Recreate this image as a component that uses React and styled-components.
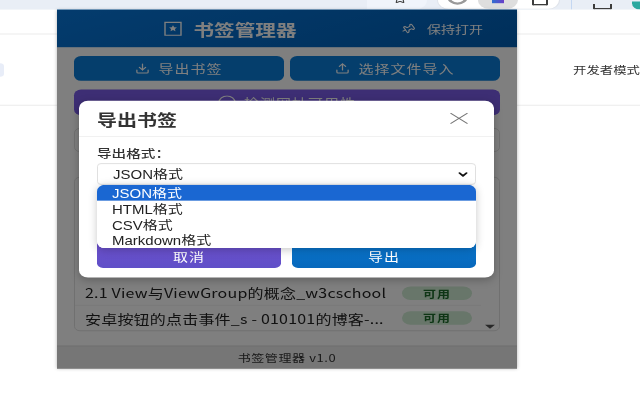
import React from 'react';
import styled, { createGlobalStyle } from 'styled-components';
import { Download, Upload, Pin, ChevronDown, Star } from 'lucide-react';

const GlobalStyle = createGlobalStyle`
    html, body {
        margin: 0;
        padding: 0;
        width: 640px;
        height: 400px;
        overflow: hidden;
        background: #fff;
    }
`;

const Frame = styled.div`
    width: 640px;
    height: 400px;
    overflow: hidden;
`;

// the reference is squashed vertically, so everything is laid out 500px tall and scaled
const Stage = styled.div`
    position: relative;
    width: 640px;
    height: 500px;
    transform: scale(1, 0.8);
    transform-origin: top left;
    filter: blur(0.5px);
    background: #fff;
    font-family: "Noto Sans CJK SC", "Noto Sans", sans-serif;
`;

const BrowserBar = styled.div`
    height: 12px;
    background: #e9eef6;
    display: flex;
    align-items: flex-end;
    overflow: hidden;
`;

const OmniEnd = styled.div`
    width: 60px;
    height: 12px;
    margin-left: 367px;
    padding-left: 26px;
    box-sizing: border-box;
    background: #f0f4fb;
    border-radius: 0 0 16px 0;
    color: #444;
    display: flex;
    align-items: flex-start;
    overflow: hidden;
`;

const StarIcon = styled(Star)`
    margin-top: -9px;
`;

const ExtPill = styled.div`
    width: 123px;
    height: 12px;
    margin-left: 10px;
    background: #fff;
    border-radius: 0 0 14px 14px;
    border: 1px solid #dfe3ea;
    border-top: 0;
    box-sizing: border-box;
    display: flex;
    gap: 10px;
    padding-left: 9px;
`;

const Ring = styled.div`
    width: 21px;
    height: 21px;
    margin-top: -15px;
    box-sizing: border-box;
    border: 3px solid #9a9a9a;
    border-radius: 50%;
`;

const ExtBlob = styled.div`
    width: 40px;
    height: 11px;
    background: #dedede;
    border-radius: 0 0 14px 14px;
    display: flex;
    justify-content: center;
`;

const ExtLogo = styled.div`
    width: 12px;
    height: 4px;
    background: linear-gradient(90deg, #2f6fd0, #6a3fc8);
`;

const OutlineIcon = styled.div`
    width: ${({ $w }) => $w}px;
    height: 7px;
    box-sizing: border-box;
    margin-left: ${({ $ml }) => $ml}px;
    border: 2px solid #3c3c3c;
    border-top: 0;
    border-radius: 0 0 2px 2px;
    flex: none;
`;

const Divider = styled.div`
    width: 1px;
    height: 12px;
    margin-left: 11px;
    background: #c4d7f2;
`;

const TealDot = styled.div`
    width: 8px;
    height: 10px;
    margin-left: 20px;
    background: #2aa8a0;
    border-radius: 0 0 0 8px;
`;

const PageRow = styled.div`
    height: ${({ $h }) => $h}px;
    box-sizing: border-box;
    border-bottom: 1px solid #e6e6e6;
    display: flex;
    align-items: center;
    justify-content: space-between;
    font-size: 13.4px;
    color: #333;
    overflow: hidden;
    white-space: nowrap;
`;

const PageBlob = styled.div`
    width: 4px;
    height: 17px;
    background: #e8edf8;
    border-radius: 0 9px 9px 0;
`;

const Popup = styled.div`
    position: absolute;
    left: 57px;
    top: 12px;
    width: 460px;
    height: 449px;
    background: #fff;
    box-shadow: 0 0 4px rgba(0, 0, 0, 0.3);
    display: flex;
    flex-direction: column;
`;

const Header = styled.header`
    height: 47px;
    flex: none;
    box-sizing: border-box;
    padding-right: 114px;
    background: linear-gradient(160deg, #0878dc, #005eb4);
    display: flex;
    align-items: center;
    justify-content: center;
    position: relative;
    color: #fff;
    gap: 12px;
`;

const HeaderTitle = styled.h1`
    margin: 0;
    font-size: 20.6px;
    font-weight: 700;
`;

const KeepOpen = styled.div`
    position: absolute;
    right: 34px;
    top: 0;
    bottom: 0;
    display: flex;
    align-items: center;
    gap: 12px;
    font-size: 14px;
`;

const PinIcon = styled(Pin)`
    transform: rotate(60deg);
`;

const Body = styled.div`
    flex: 1;
    min-height: 0;
    padding: 11px 17px 0 17px;
    display: flex;
    flex-direction: column;
`;

const BtnRow = styled.div`
    display: grid;
    grid-template-columns: 1fr 1fr;
    gap: 6px;
`;

const ActionBtn = styled.div`
    height: 31px;
    border-radius: 7px;
    background: ${({ $bg }) => $bg};
    color: #fff;
    font-size: 15px;
    letter-spacing: 1px;
    display: flex;
    align-items: center;
    justify-content: center;
    gap: 8px;
`;

const CheckBtn = styled(ActionBtn)`
    margin-top: 11px;
    height: 32px;
`;

const SearchBox = styled.div`
    margin-top: 16px;
    height: 30px;
    border: 1px solid #ddd;
    border-radius: 6px;
    box-sizing: border-box;
    background: #fff;
`;

const ListBox = styled.div`
    margin-top: 31px;
    height: 193px;
    border: 1px solid #ddd;
    border-radius: 6px;
    box-sizing: border-box;
    display: flex;
    flex-direction: column;
    justify-content: flex-end;
    position: relative;
    padding-right: 18px;
`;

const Row = styled.div`
    height: 31px;
    box-sizing: border-box;
    display: grid;
    grid-template-columns: 1fr 70px;
    align-items: center;
    padding: 0 9px 0 10px;
    border-bottom: ${({ $last }) => ($last ? '0' : '1px solid #eee')};
`;

const RowTitle = styled.span`
    font-size: 16px;
    letter-spacing: 0.2px;
    color: #222;
    white-space: nowrap;
    overflow: hidden;
`;

const Badge = styled.span`
    height: 17px;
    border-radius: 9px;
    background: #d0ecd4;
    color: #1c6b2a;
    font-size: 13px;
    font-weight: 700;
    letter-spacing: 1px;
    display: flex;
    align-items: center;
    justify-content: center;
`;

const ScrollArrow = styled.div`
    position: absolute;
    right: 4px;
    bottom: 2px;
    width: 0;
    height: 0;
    border-left: 5px solid transparent;
    border-right: 5px solid transparent;
    border-top: 5px solid #505050;
`;

const Footer = styled.footer`
    margin-top: auto;
    height: 29px;
    flex: none;
    box-sizing: border-box;
    border-top: 1px solid #ddd;
    background: #ececec;
    display: flex;
    align-items: center;
    justify-content: center;
    font-size: 13px;
    letter-spacing: 0.6px;
    color: #333;
`;

const Overlay = styled.div`
    position: absolute;
    inset: 0;
    background: rgba(0, 0, 0, 0.5);
`;

const Modal = styled.div`
    position: absolute;
    left: 22px;
    top: 114px;
    width: 415px;
    height: 221px;
    background: #fff;
    border-radius: 9px;
    box-shadow: 0 3px 10px rgba(0, 0, 0, 0.25);
    display: flex;
    flex-direction: column;
`;

const ModalHead = styled.div`
    height: 45px;
    flex: none;
    box-sizing: border-box;
    border-bottom: 1px solid #eee;
    padding: 0 26px 0 18px;
    display: flex;
    align-items: center;
    justify-content: space-between;
`;

const ModalTitle = styled.h2`
    margin: 0;
    font-size: 20px;
    font-weight: 700;
    color: #333;
`;

const ModalBody = styled.div`
    flex: 1;
    padding: 10px 18px 12px 18px;
    display: flex;
    flex-direction: column;
    position: relative;
`;

const Label = styled.div`
    font-size: 14.6px;
    font-weight: 500;
    line-height: 21px;
    color: #333;
`;

const SelectBox = styled.div`
    margin-top: 2px;
    height: 27px;
    box-sizing: border-box;
    border: 1px solid #ddd;
    border-radius: 4px;
    padding: 0 5px 0 15px;
    display: flex;
    align-items: center;
    justify-content: space-between;
    font-family: "Liberation Sans", "Noto Sans CJK SC", sans-serif;
    font-size: 15px;
    color: #222;
`;

const Dropdown = styled.div`
    position: absolute;
    left: 18px;
    right: 18px;
    top: 60px;
    background: #fff;
    border-radius: 8px;
    overflow: hidden;
    box-shadow: 0 2px 10px rgba(0, 0, 0, 0.22);
    z-index: 2;
    font-family: "Liberation Sans", "Noto Sans CJK SC", sans-serif;
    font-size: 15px;
`;

const Option = styled.div`
    height: 19.7px;
    padding-left: 15px;
    display: flex;
    align-items: center;
    color: ${({ $active }) => ($active ? '#fff' : '#222')};
    background: ${({ $active }) => ($active ? '#1a67d2' : '#fff')};
`;

const ModalActions = styled.div`
    margin-top: auto;
    display: grid;
    grid-template-columns: 1fr 1fr;
    gap: 11px;
`;

const ModalBtn = styled.div`
    height: 40px;
    border-radius: 6px;
    padding-bottom: 4px;
    box-sizing: border-box;
    background: ${({ $bg }) => $bg};
    color: #fff;
    font-size: 15px;
    letter-spacing: 1px;
    display: flex;
    align-items: flex-end;
    justify-content: center;
`;

const BookmarkIcon = () => (
    <svg width="18" height="20" viewBox="0 0 18 20" fill="none" stroke="currentColor" strokeWidth="1.4">
        <path d="M1 2h16v16H1z" />
        <path d="M9 5.5l1.2 2.6 2.8.3-2.1 1.8.6 2.8L9 11.6l-2.5 1.4.6-2.8L5 8.4l2.8-.3z" fill="currentColor" stroke="none" />
    </svg>
);

const CheckIcon = () => (
    <svg width="18" height="18" viewBox="0 0 18 18" fill="none" stroke="currentColor" strokeWidth="1.3">
        <circle cx="9" cy="9" r="8" />
    </svg>
);

const CloseIcon = () => (
    <svg width="18" height="14" viewBox="0 0 18 14" fill="none" stroke="#777" strokeWidth="1.2">
        <path d="M0.5 0.5l17 13M17.5 0.5l-17 13" />
    </svg>
);

const App = () => {
    return (
        <Frame>
            <GlobalStyle />
            <Stage>
                <BrowserBar>
                    <OmniEnd>
                        <StarIcon size={14} />
                    </OmniEnd>
                    <ExtPill>
                        <Ring />
                        <ExtBlob>
                            <ExtLogo />
                        </ExtBlob>
                        <OutlineIcon $w={16} $ml={4} />
                    </ExtPill>
                    <Divider />
                    <OutlineIcon $w={19} $ml={21} />
                    <TealDot />
                </BrowserBar>
                <PageRow $h={31} />
                <PageRow $h={89}>
                    <PageBlob />
                    <span>开发者模式</span>
                </PageRow>

                <Popup>
                    <Header>
                        <BookmarkIcon />
                        <HeaderTitle>书签管理器</HeaderTitle>
                        <KeepOpen>
                            <PinIcon size={14} />
                            保持打开
                        </KeepOpen>
                    </Header>
                    <Body>
                        <BtnRow>
                            <ActionBtn $bg="#0a7cd8">
                                <Download size={15} />
                                导出书签
                            </ActionBtn>
                            <ActionBtn $bg="#0a7cd8">
                                <Upload size={15} />
                                选择文件导入
                            </ActionBtn>
                        </BtnRow>
                        <CheckBtn $bg="#7a5ce8">
                            <CheckIcon />
                            检测网址可用性
                        </CheckBtn>
                        <SearchBox />
                        <ListBox>
                            <Row>
                                <RowTitle>2.1 View与ViewGroup的概念_w3cschool</RowTitle>
                                <Badge>可用</Badge>
                            </Row>
                            <Row $last>
                                <RowTitle>安卓按钮的点击事件_s - 010101的博客-...</RowTitle>
                                <Badge>可用</Badge>
                            </Row>
                            <ScrollArrow />
                        </ListBox>
                    </Body>
                    <Footer>书签管理器 v1.0</Footer>
                    <Overlay />
                    <Modal>
                        <ModalHead>
                            <ModalTitle>导出书签</ModalTitle>
                            <CloseIcon />
                        </ModalHead>
                        <ModalBody>
                            <Label>导出格式：</Label>
                            <SelectBox>
                                JSON格式
                                <ChevronDown size={14} color="#111" strokeWidth={3.5} />
                            </SelectBox>
                            <Dropdown>
                                <Option $active>JSON格式</Option>
                                <Option>HTML格式</Option>
                                <Option>CSV格式</Option>
                                <Option>Markdown格式</Option>
                            </Dropdown>
                            <ModalActions>
                                <ModalBtn $bg="linear-gradient(180deg, #7050cc, #5f4fc8)">取消</ModalBtn>
                                <ModalBtn $bg="linear-gradient(180deg, #0a78d0, #0768bc)">导出</ModalBtn>
                            </ModalActions>
                        </ModalBody>
                    </Modal>
                </Popup>
            </Stage>
        </Frame>
    );
};

export default App;
